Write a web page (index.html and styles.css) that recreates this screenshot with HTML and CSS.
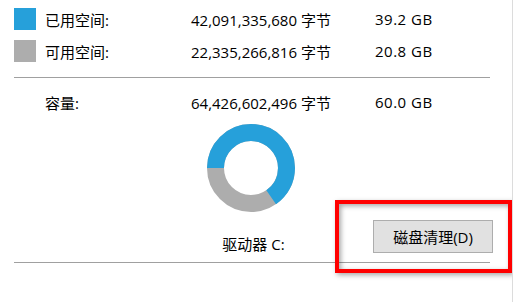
FILE: index.html
```html
<!DOCTYPE html>
<html lang="zh-CN">
<head>
<meta charset="utf-8">
<link rel="stylesheet" href="styles.css">
</head>
<body>
<div class="page">
  <div class="stats">
    <span class="swatch swatch-used"></span>
    <span class="label">已用空间:</span>
    <span class="num">42,091,335,680 字节</span>
    <span class="num size">39.2 GB</span>

    <span class="swatch swatch-free"></span>
    <span class="label">可用空间:</span>
    <span class="num">22,335,266,816 字节</span>
    <span class="num size">20.8 GB</span>
  </div>
  <div class="rule rule-top"></div>
  <div class="stats stats-cap">
    <span class="swatch-blank"></span>
    <span class="label">容量:</span>
    <span class="num">64,426,602,496 字节</span>
    <span class="num size">60.0 GB</span>
  </div>
  <div class="chart">
    <svg class="donut" width="88" height="88" viewBox="0 0 88 88">
      <circle cx="44" cy="44" r="35.5" fill="none" stroke="#adadad" stroke-width="17"/>
      <circle cx="44" cy="44" r="35.5" fill="none" stroke="#26a0da" stroke-width="17"
        stroke-dasharray="145.6 300" transform="rotate(180 44 44)"/>
    </svg>
  </div>
  <div class="footer">
    <span></span>
    <span class="drive">驱动器 C:</span>
    <button class="btn">磁盘清理(D)</button>
  </div>
  <div class="rule rule-bottom"></div>
  <div class="highlight"></div>
</div>
</body>
</html>
```
FILE: styles.css
```css
html, body {
  margin: 0;
  padding: 0;
  background: #fff;
}
.page {
  position: relative;
  width: 512px;
  height: 302px;
  border-right: 1px solid #dcdcdc;
  box-sizing: content-box;
  font-family: "Open Sans", "Noto Sans CJK SC", sans-serif;
  font-size: 15px;
  color: #000;
  overflow: hidden;
}
.stats {
  display: grid;
  grid-template-columns: 22px 155px 184px auto;
  column-gap: 0;
  grid-auto-rows: 32px;
  align-items: center;
  padding: 3px 0 0 14px;
}
.stats .label {
  margin-left: 9px;
}
.stats .label, .stats .num {
  white-space: nowrap;
}
.stats .size {
  letter-spacing: 0.5px;
}
.swatch {
  width: 22px;
  height: 22px;
  display: block;
}
.swatch-used { background: #26a0da; }
.swatch-free { background: #adadad; }
.rule {
  height: 1px;
  background: #a0a0a0;
  margin-left: 14px;
  width: 476px;
}
.rule-top { margin-top: 10px; }
.stats-cap {
  padding-top: 8px;
}
.chart {
  display: flex;
  justify-content: center;
  width: 476px;
  margin: 6px 0 0 14px;
}
.donut { display: block; margin-right: 2px; }
.footer {
  display: grid;
  grid-template-columns: 1fr auto 1fr;
  align-items: end;
  width: 479px;
  margin: 8px 0 0 14px;
}
.drive {
  line-height: 18px;
  white-space: nowrap;
}
.btn {
  justify-self: end;
  width: 120px;
  height: 33px;
  background: #e1e1e1;
  border: 1px solid #adadad;
  font: inherit;
  color: #000;
  padding: 0;
}
.rule-bottom { margin-top: 9px; }
.highlight {
  position: absolute;
  left: 335px;
  top: 200px;
  width: 177px;
  height: 73px;
  box-sizing: border-box;
  border: 4px solid #ff0000;
  box-shadow: 2px 2px 5px rgba(0,0,0,0.35), inset 2px 2px 5px rgba(0,0,0,0.35);
}
```
